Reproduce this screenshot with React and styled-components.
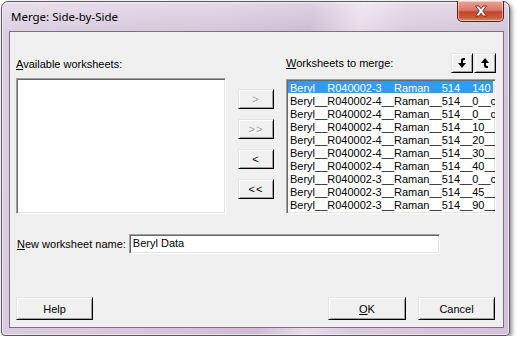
import React from "react";
import styled, { createGlobalStyle } from "styled-components";

const Global = createGlobalStyle`
  html, body { margin: 0; padding: 0; background: #ffffff; }
  body { font-family: "Liberation Sans", Arial, sans-serif; font-size: 11px; color: #000; }
  * { box-sizing: border-box; }
`;

const Window = styled.div`
  margin: 1px 0 0 1px;
  width: 509px;
  height: 335px;
  border: 1px solid #5e5464;
  border-radius: 7px 7px 4px 4px;
  background:
    linear-gradient(180deg, rgba(255,255,255,0.35) 0px, rgba(255,255,255,0) 30px),
    linear-gradient(100deg, #dccfe1 0%, #d5c5da 40%, #cdbcd3 55%, #e6dde9 64%, #d9cbde 72%, #d2c1d7 100%);
  box-shadow: 2px 2px 4px rgba(0,0,0,0.45), inset 0 0 0 1px rgba(255,255,255,0.55);
  display: flex;
  flex-direction: column;
  position: relative;
`;

const TitleBar = styled.div`
  height: 29px;
  display: flex;
  align-items: flex-start;
  padding-left: 9px;
`;

const Title = styled.div`
  font-family: "Noto Sans", "Open Sans", sans-serif;
  font-size: 11.5px;
  line-height: 14px;
  margin-top: 8px;
  color: #000;
`;

const CloseButton = styled.div`
  position: absolute;
  top: -1px;
  right: 5px;
  width: 47px;
  height: 21px;
  border: 1px solid #5a1e1e;
  border-top: none;
  border-radius: 0 0 5px 5px;
  background: linear-gradient(180deg, #e8a595 0%, #d87a68 45%, #c4432e 55%, #d05a3c 85%, #e6966f 100%);
  box-shadow: inset 0 0 0 1px rgba(255,255,255,0.45);
  display: flex;
  align-items: center;
  justify-content: center;
`;

const Client = styled.div`
  flex: 1;
  margin: 0 5px 7px 7px;
  background: #f0f0f0;
  border: 1px solid #7b6f82;
  display: flex;
  flex-direction: column;
  padding: 0 6px 0 6px;
`;

const TopArea = styled.div`
  display: grid;
  grid-template-columns: 210px 36px 210px;
  column-gap: 12px;
  align-items: start;
`;

const Column = styled.div`
  display: flex;
  flex-direction: column;
  padding-top: ${(p) => p.$top}px;
`;

const Label = styled.div`
  line-height: 13px;
  white-space: nowrap;
  margin-bottom: ${(p) => p.$gap || 0}px;
`;

const Key = styled.span`
  text-decoration: underline;
  text-underline-offset: 1px;
`;

const ListBox = styled.div`
  width: 210px;
  height: ${(p) => p.$h}px;
  background: #fff;
  border: 1px solid;
  border-color: #a0a0a0 #ffffff #ffffff #a0a0a0;
  box-shadow: inset 1px 1px 0 #696969, inset -1px -1px 0 #e3e3e3;
  padding: 1px 2px 1px 1px;
  overflow: hidden;
`;

const Row = styled.div`
  height: 13px;
  padding: 1px 0 0 2px;
  white-space: nowrap;
  line-height: 13px;
  background: ${(p) =>
    p.$sel ? "linear-gradient(#3399ff, #3399ff) top left / 100% 12px no-repeat" : "transparent"};
  color: ${(p) => (p.$sel ? "#fff" : "#000")};
`;

const Btn = styled.button`
  font-family: "Liberation Sans", Arial, sans-serif;
  font-size: 11px;
  font-weight: normal;
  width: ${(p) => p.$w}px;
  height: ${(p) => p.$h}px;
  padding: 0;
  background: #f0f0f0;
  border: 1px solid;
  border-color: #e3e3e3 #000000 #000000 #e3e3e3;
  box-shadow: inset 1px 1px 0 #ffffff, inset -1px -1px 0 #a0a0a0;
  color: ${(p) => (p.disabled ? "#a0a0a0" : "#000")};
  text-shadow: ${(p) => (p.disabled ? "1px 1px 0 #fff" : "none")};
  letter-spacing: ${(p) => (p.$spaced ? "1px" : "0")};
  display: flex;
  align-items: center;
  justify-content: center;
`;

const MidColumn = styled.div`
  display: flex;
  flex-direction: column;
  gap: 10px;
  padding-top: 57px;
`;

const Header = styled.div`
  display: flex;
  align-items: center;
  justify-content: space-between;
  height: 20px;
  margin-bottom: 6px;
`;

const ArrowGroup = styled.div`
  display: flex;
  gap: 1px;
`;

const NameRow = styled.div`
  display: flex;
  align-items: center;
  margin-top: 20px;
  padding-left: 1px;
  gap: 3px;
`;

const TextBox = styled.div`
  width: 311px;
  height: 20px;
  background: #fff;
  border: 1px solid;
  border-color: #a0a0a0 #ffffff #ffffff #a0a0a0;
  box-shadow: inset 1px 1px 0 #696969, inset -1px -1px 0 #e3e3e3;
  padding: 0 3px;
  line-height: 17px;
`;

const ButtonRow = styled.div`
  display: flex;
  align-items: center;
  margin-top: auto;
  margin-bottom: 7px;
  padding-right: 2px;
  gap: 12px;
`;

const Spacer = styled.div`
  flex: 1;
`;

const rows = [
  "Beryl__R040002-3__Raman__514__140__ccw",
  "Beryl__R040002-4__Raman__514__0__ccw",
  "Beryl__R040002-4__Raman__514__0__ccw",
  "Beryl__R040002-4__Raman__514__10__ccw",
  "Beryl__R040002-4__Raman__514__20__ccw",
  "Beryl__R040002-4__Raman__514__30__ccw",
  "Beryl__R040002-4__Raman__514__40__ccw",
  "Beryl__R040002-3__Raman__514__0__ccw",
  "Beryl__R040002-3__Raman__514__45__ccw",
  "Beryl__R040002-3__Raman__514__90__ccw",
];

const DownArrow = () => (
  <svg width="10" height="12" viewBox="0 0 10 12">
    <path d="M4 6 L4 3 Q4 1 6.5 1 L8 1 L8 3 L7 3 Q6 3 6 4 L6 6 L9 6 L5 11 L1 6 Z" fill="#000" />
  </svg>
);

const UpArrow = () => (
  <svg width="10" height="12" viewBox="0 0 10 12">
    <path d="M4 6 L4 9 Q4 11 6.5 11 L8 11 L8 9 L7 9 Q6 9 6 8 L6 6 L9 6 L5 1 L1 6 Z" fill="#000" />
  </svg>
);

const CloseX = () => (
  <svg width="14" height="12" viewBox="0 0 14 12">
    <path
      d="M1.5 1 L5 1 L7 3.8 L9 1 L12.5 1 L8.8 6 L12.5 11 L9 11 L7 8.2 L5 11 L1.5 11 L5.2 6 Z"
      fill="#fff"
      stroke="#6a2020"
      strokeWidth="0.9"
      strokeLinejoin="round"
    />
  </svg>
);

export default function App() {
  return (
    <>
      <Global />
      <Window>
        <TitleBar>
          <Title>Merge: Side-by-Side</Title>
        </TitleBar>
        <CloseButton>
          <CloseX />
        </CloseButton>
        <Client>
          <TopArea>
            <Column $top={26}>
              <Label $gap={7}>
                <Key>A</Key>vailable worksheets:
              </Label>
              <ListBox $h={136} />
            </Column>
            <MidColumn>
              <Btn $w={36} $h={20} $spaced disabled>&gt;</Btn>
              <Btn $w={36} $h={20} $spaced disabled>&gt;&gt;</Btn>
              <Btn $w={36} $h={20} $spaced>&lt;</Btn>
              <Btn $w={36} $h={20} $spaced>&lt;&lt;</Btn>
            </MidColumn>
            <Column $top={21}>
              <Header>
                <Label>
                  <Key>W</Key>orksheets to merge:
                </Label>
                <ArrowGroup>
                  <Btn $w={22} $h={20}>
                    <DownArrow />
                  </Btn>
                  <Btn $w={22} $h={20}>
                    <UpArrow />
                  </Btn>
                </ArrowGroup>
              </Header>
              <ListBox $h={135}>
                {rows.map((r, i) => (
                  <Row key={i} $sel={i === 0}>
                    {r}
                  </Row>
                ))}
              </ListBox>
            </Column>
          </TopArea>
          <NameRow>
            <Label>
              <Key>N</Key>ew worksheet name:
            </Label>
            <TextBox>Beryl Data</TextBox>
          </NameRow>
          <ButtonRow>
            <Btn $w={77} $h={23}>Help</Btn>
            <Spacer />
            <Btn $w={78} $h={23}>
              <span>
                <Key>O</Key>K
              </span>
            </Btn>
            <Btn $w={77} $h={23}>Cancel</Btn>
          </ButtonRow>
        </Client>
      </Window>
    </>
  );
}
